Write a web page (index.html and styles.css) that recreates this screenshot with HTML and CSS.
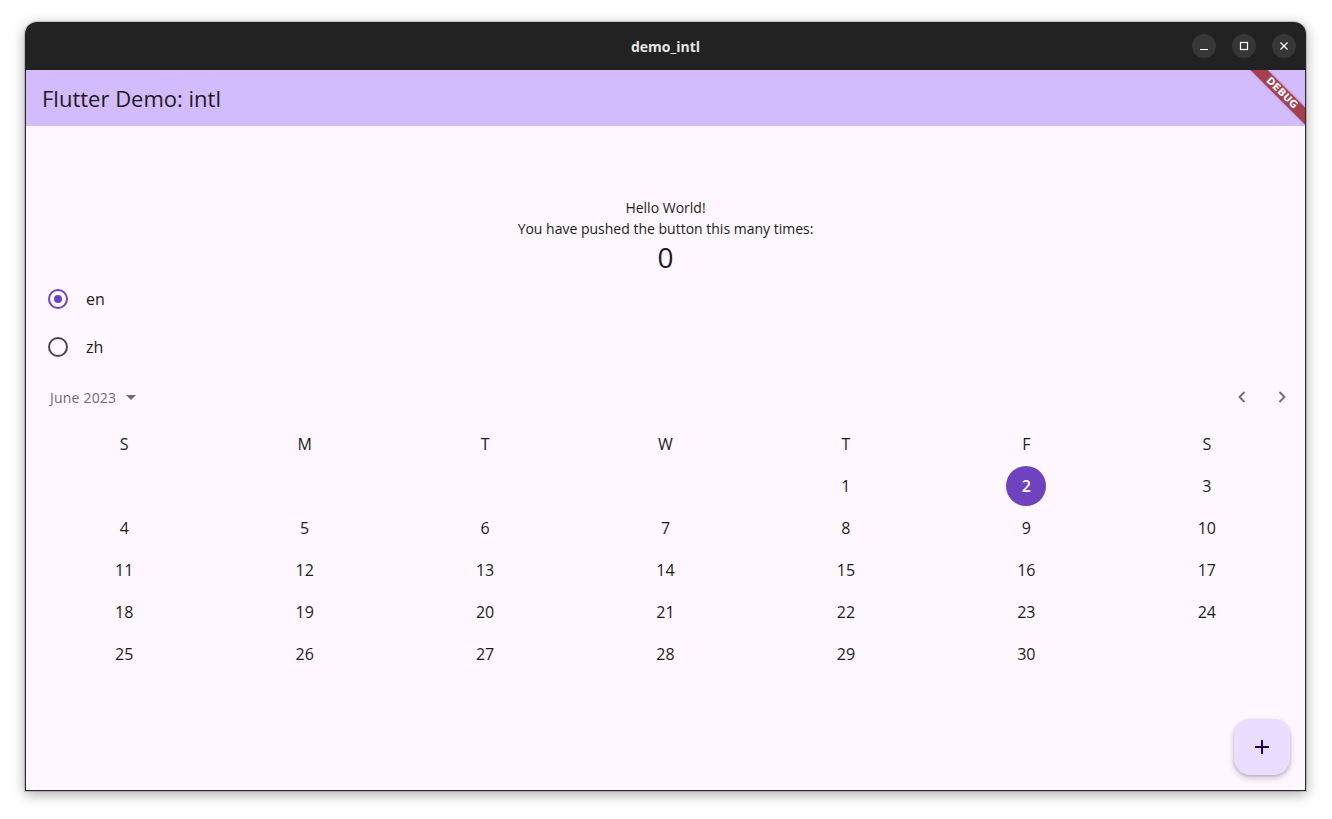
FILE: index.html
```html
<!DOCTYPE html>
<html>
<head>
<meta charset="utf-8">
<link rel="stylesheet" href="styles.css">
</head>
<body>
<div class="window">
  <div class="titlebar">
    <div class="title">demo_intl</div>
    <div class="controls">
      <div class="ctl"><svg width="24" height="24" viewBox="0 0 24 24"><path d="M8 15.5h8" stroke="#fff" stroke-width="1.2" fill="none"/></svg></div>
      <div class="ctl"><svg width="24" height="24" viewBox="0 0 24 24"><rect x="8.5" y="8.5" width="7" height="7" stroke="#fff" stroke-width="1.2" fill="none"/></svg></div>
      <div class="ctl"><svg width="24" height="24" viewBox="0 0 24 24"><path d="M8.5 8.5l7 7M15.5 8.5l-7 7" stroke="#fff" stroke-width="1.3" fill="none"/></svg></div>
    </div>
  </div>
  <div class="app">
    <div class="appbar">Flutter Demo: intl</div>
    <div class="banner"><span>DEBUG</span></div>
    <div class="content">
      <div class="center">
        <div class="line">Hello World!</div>
        <div class="line l2">You have pushed the button this many times:</div>
        <div class="count">0</div>
      </div>
      <div class="radio-row">
        <span class="radio on"></span><span class="rlabel">en</span>
      </div>
      <div class="radio-row">
        <span class="radio"></span><span class="rlabel">zh</span>
      </div>
      <div class="cal-head">
        <div class="month">June 2023 <svg width="10" height="5" viewBox="0 0 10 5"><path d="M0 0h10L5 5z" fill="#6e6a73"/></svg></div>
        <div class="navs">
          <div class="nav"><svg width="24" height="24" viewBox="0 0 24 24"><path d="M14.5 7l-5 5 5 5" stroke="#6e6a73" stroke-width="1.8" fill="none"/></svg></div>
          <div class="nav"><svg width="24" height="24" viewBox="0 0 24 24"><path d="M9.5 7l5 5-5 5" stroke="#6e6a73" stroke-width="1.8" fill="none"/></svg></div>
        </div>
      </div>
      <div class="grid">
        <div class="c">S</div><div class="c">M</div><div class="c">T</div><div class="c">W</div><div class="c">T</div><div class="c">F</div><div class="c">S</div>
        <div class="c"></div><div class="c"></div><div class="c"></div><div class="c"></div><div class="c">1</div><div class="c"><span class="sel">2</span></div><div class="c">3</div>
        <div class="c">4</div><div class="c">5</div><div class="c">6</div><div class="c">7</div><div class="c">8</div><div class="c">9</div><div class="c">10</div>
        <div class="c">11</div><div class="c">12</div><div class="c">13</div><div class="c">14</div><div class="c">15</div><div class="c">16</div><div class="c">17</div>
        <div class="c">18</div><div class="c">19</div><div class="c">20</div><div class="c">21</div><div class="c">22</div><div class="c">23</div><div class="c">24</div>
        <div class="c">25</div><div class="c">26</div><div class="c">27</div><div class="c">28</div><div class="c">29</div><div class="c">30</div><div class="c"></div>
      </div>
    </div>
    <div class="fab"><svg width="24" height="24" viewBox="0 0 24 24"><path d="M12 5v14M5 12h14" stroke="#21005d" stroke-width="2" fill="none"/></svg></div>
  </div>
</div>
</body>
</html>
```
FILE: styles.css
```css
html, body { margin: 0; padding: 0; }
body {
  background: #ffffff;
  width: 1332px;
  height: 819px;
  padding: 22px 0 0 25px;
  box-sizing: border-box;
  font-family: "Open Sans", "Noto Sans", sans-serif;
  color: #1d1b20;
  overflow: hidden;
}
.window {
  width: 1281px;
  height: 769px;
  border-radius: 12px 12px 0 0;
  display: flex;
  flex-direction: column;
  box-shadow: 0 3px 14px rgba(0,0,0,0.35), 0 0 0 1px rgba(0,0,0,0.15);
  overflow: hidden;
}
.titlebar {
  height: 48px;
  background: #222222;
  position: relative;
  display: flex;
  align-items: center;
  justify-content: center;
  flex: none;
}
.title {
  color: #e6e6e6;
  font-weight: 700;
  font-size: 14px;
}
.controls {
  position: absolute;
  right: 10px;
  top: 12px;
  display: flex;
  gap: 16px;
}
.ctl {
  width: 24px;
  height: 24px;
  border-radius: 50%;
  background: #373737;
  display: flex;
}
.app {
  flex: 1;
  background: #fef7ff;
  border: 1px solid #2a2a2a;
  border-top: none;
  position: relative;
  overflow: hidden;
  display: flex;
  flex-direction: column;
}
.appbar {
  height: 56px;
  background: #d3bcfd;
  display: flex;
  align-items: center;
  padding-left: 16px;
  font-size: 22px;
  flex: none;
}
.banner {
  position: absolute;
  right: -37px;
  top: 17px;
  width: 120px;
  height: 12px;
  background: #a83f4f;
  transform: rotate(45deg);
  display: flex;
  align-items: center;
  justify-content: center;
  box-shadow: 0 0 3px rgba(0,0,0,0.25);
}
.banner span {
  color: #fff;
  font-size: 10px;
  font-weight: 800;
  font-family: "DejaVu Sans", sans-serif;
  letter-spacing: 0.2px;
  line-height: 12px;
}
.content {
  flex: 1;
  padding: 72px 8px 0 8px;
  display: flex;
  flex-direction: column;
}
.center {
  display: flex;
  flex-direction: column;
  align-items: center;
}
.line { font-size: 14px; line-height: 20px; }
.l2 { line-height: 21px; }
.count { font-size: 28px; line-height: 36px; }
.radio-row {
  height: 48px;
  display: flex;
  align-items: center;
  padding-left: 14px;
}
.radio {
  width: 16px;
  height: 16px;
  border: 2px solid #49454f;
  border-radius: 50%;
  box-sizing: content-box;
  position: relative;
}
.radio.on { border-color: #6f43c0; }
.radio.on::after {
  content: "";
  position: absolute;
  left: 4px; top: 4px;
  width: 8px; height: 8px;
  border-radius: 50%;
  background: #6f43c0;
}
.rlabel {
  margin-left: 18px;
  font-size: 16px;
}
.cal-head {
  height: 52px;
  display: flex;
  align-items: center;
  justify-content: space-between;
  padding-left: 16px;
}
.month {
  font-size: 14px;
  letter-spacing: 0.2px;
  color: #6e6a73;
  display: flex;
  align-items: center;
  gap: 10px;
}
.navs { display: flex; margin-right: -5px; }
.nav {
  width: 40px;
  height: 40px;
  display: flex;
  align-items: center;
  justify-content: center;
}
.grid {
  display: grid;
  grid-template-columns: repeat(7, 1fr);
  grid-auto-rows: 42px;
}
.c {
  display: flex;
  align-items: center;
  justify-content: center;
  font-size: 16px;
}
.sel {
  width: 40px;
  height: 40px;
  border-radius: 50%;
  background: #6f43c0;
  color: #fff;
  font-weight: 600;
  display: flex;
  align-items: center;
  justify-content: center;
}
.fab {
  position: absolute;
  right: 15px;
  bottom: 15px;
  width: 56px;
  height: 56px;
  border-radius: 16px;
  background: #eaddff;
  box-shadow: 0 3px 6px rgba(0,0,0,0.2), 0 1px 3px rgba(0,0,0,0.15);
  display: flex;
  align-items: center;
  justify-content: center;
}
```
